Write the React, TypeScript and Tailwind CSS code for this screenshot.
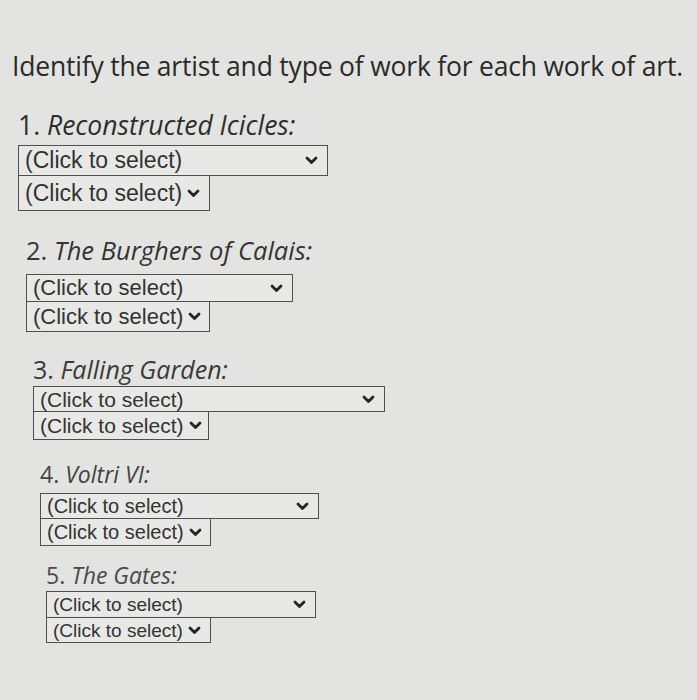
import React from "react";

type Item = {
  num: string;
  title: string;
  wrap: string;
  labelCls: string;
  selCls: string;
  wide: string;
  narrow: string;
  gap: string;
};

const items: Item[] = [
  {
    num: "1.",
    title: "Reconstructed Icicles:",
    wrap: "ml-[18px] mt-[30px]",
    labelCls: "text-[26.5px] h-[26px] leading-[26px] text-[#2e2e2e]",
    selCls: "text-[23px]",
    wide: "w-[310px] h-[31px]",
    narrow: "w-[192px] h-[36px]",
    gap: "mt-[7px]",
  },
  {
    num: "2.",
    title: "The Burghers of Calais:",
    wrap: "ml-[26px] mt-[26px]",
    labelCls: "text-[25.5px] h-[26px] leading-[26px] text-[#343434]",
    selCls: "text-[22px]",
    wide: "w-[267px] h-[28px]",
    narrow: "w-[184px] h-[31px]",
    gap: "mt-[11px]",
  },
  {
    num: "3.",
    title: "Falling Garden:",
    wrap: "ml-[33px] mt-[24px]",
    labelCls: "text-[25px] h-[26px] leading-[26px] text-[#3a3a3a]",
    selCls: "text-[21px]",
    wide: "w-[352px] h-[26px]",
    narrow: "w-[176px] h-[29px]",
    gap: "mt-[4px]",
  },
  {
    num: "4.",
    title: "Voltri VI:",
    wrap: "ml-[40px] mt-[22px]",
    labelCls: "text-[23px] h-[24px] leading-[24px] text-[#444]",
    selCls: "text-[20px]",
    wide: "w-[279px] h-[26px]",
    narrow: "w-[171px] h-[28px]",
    gap: "mt-[7px]",
  },
  {
    num: "5.",
    title: "The Gates:",
    wrap: "ml-[46px] mt-[17px]",
    labelCls: "text-[23px] h-[24px] leading-[24px] text-[#4a4a4a]",
    selCls: "text-[19px]",
    wide: "w-[270px] h-[27px]",
    narrow: "w-[165px] h-[26px]",
    gap: "mt-[4px]",
  },
];

function Chevron() {
  return (
    <svg width="13" height="9" viewBox="0 0 13 9" className="shrink-0">
      <path
        d="M2 2 L6.5 6.6 L11 2"
        fill="none"
        stroke="#262626"
        strokeWidth="2.8"
        strokeLinecap="round"
        strokeLinejoin="round"
      />
    </svg>
  );
}

function Select({ size, text, wide }: { size: string; text: string; wide: boolean }) {
  return (
    <div
      className={`${size} flex items-center border border-[#4f4f4f] bg-[#e8e8e6] pl-[6px] ${
        wide ? "justify-between pr-[9px]" : "gap-[5px] pr-[6px]"
      }`}
    >
      <span className={`${text} leading-none text-[#333] whitespace-nowrap`}>(Click to select)</span>
      <Chevron />
    </div>
  );
}

export default function App() {
  return (
    <div
      className="w-[697px] h-[700px] overflow-hidden bg-[#e3e3e1] pt-[50px]"
      style={{ fontFamily: "'Open Sans', Lato, sans-serif" }}
    >
      <div className="ml-[12px] h-[32px] text-[26.5px] leading-[32px] text-[#2a2a2a] tracking-[-0.2px] whitespace-nowrap">
        Identify the artist and type of work for each work of art.
      </div>
      {items.map((it) => (
        <div key={it.num} className={it.wrap}>
          <div className={`${it.labelCls} whitespace-nowrap`}>
            {it.num} <span className="italic">{it.title}</span>
          </div>
          <div className={`${it.gap} flex flex-col`} style={{ fontFamily: "'Liberation Sans', Arial, sans-serif" }}>
            <Select size={it.wide} text={it.selCls} wide />
            <div className="-mt-px">
              <Select size={it.narrow} text={it.selCls} wide={false} />
            </div>
          </div>
        </div>
      ))}
    </div>
  );
}
